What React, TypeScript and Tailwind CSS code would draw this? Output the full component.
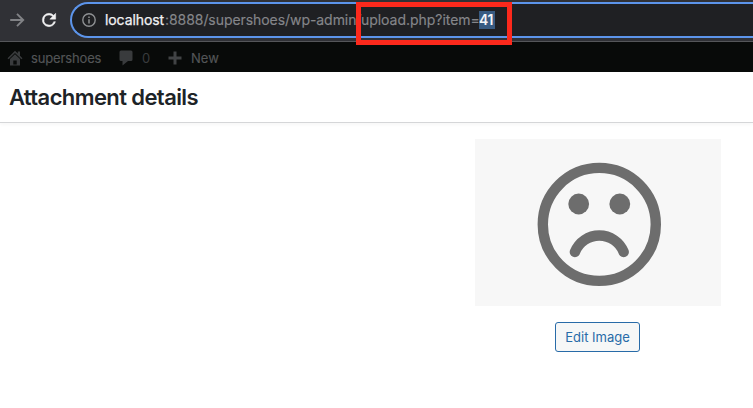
import React from 'react';

function BrowserBar() {
  return (
    <div className="flex h-[42px] items-start border-b border-[#55565a] bg-[#303136]">
      <div className="flex h-10 w-[70px] shrink-0 items-center">
        <svg className="ml-[9px] h-4 w-4" viewBox="0 0 16 16" fill="none" stroke="#818286" strokeWidth="1.9">
          <path d="M1.2 8H14M8 1.8L14.2 8L8 14.2" />
        </svg>
        <svg className="ml-[14px] h-5 w-5" viewBox="0 0 24 24" fill="#f1f1f2" stroke="#f1f1f2" strokeWidth=".6">
          <path d="M17.65 6.35A7.96 7.96 0 0 0 12 4a8 8 0 1 0 7.73 10h-2.08A6 6 0 1 1 12 6c1.66 0 3.14.69 4.22 1.78L13 11h7V4l-2.35 2.35z" />
        </svg>
      </div>
      <div className="mt-[2px] flex h-9 flex-1 items-center rounded-l-full border-2 border-r-0 border-[#5c94ea] bg-[#1f2023] pl-[10px]">
        <svg className="h-[14px] w-[14px] shrink-0" viewBox="0 0 14 14" fill="none" stroke="#8e9093">
          <circle cx="7" cy="7" r="6.2" strokeWidth="1.4" />
          <path d="M7 6.2V10.5M7 3.5V5" strokeWidth="1.5" />
        </svg>
        <div className="ml-[9px] flex text-[14px] leading-[18px] whitespace-nowrap text-[#85868a]">
          <span className="w-[60px] tracking-[-0.09px] text-[#f2f2f3] [-webkit-text-stroke:0.25px_#f2f2f3]">localhost</span>
          <span className="w-[196px] tracking-[-0.06px] [-webkit-text-stroke:0.15px_#85868a]">:8888/supershoes/wp-admin/</span>
          <span className="w-[118px] tracking-[-0.04px] [-webkit-text-stroke:0.15px_#85868a]">upload.php?item=</span>
          <span className="w-4 bg-[#385b82] font-semibold tracking-[-0.3px] text-[#f3f5f7]">41</span>
        </div>
      </div>
    </div>
  );
}

function AdminBar() {
  return (
    <div className="flex h-[30px] items-center bg-[#080a09] pt-[3px] text-[13px] leading-none text-[#535557]">
      <svg className="-mt-[2px] ml-[7px] h-4 w-4 shrink-0" viewBox="0 0 16 16" fill="#393b3d">
        <path d="M0.5 8.2L8 .8L10.8 3.5V1.5H13V5.7L15.5 8.2L14.4 9.3L8 3L1.6 9.3Z" />
        <path fillRule="evenodd" d="M8 4.2L13 9V15.5H3V9ZM6.3 10.5V14.5H9.7V10.5Z" />
      </svg>
      <span className="ml-2 w-[70px] tracking-[-0.15px] [-webkit-text-stroke:0.15px_#535557]">supershoes</span>
      <svg className="-mt-px ml-[18px] h-4 w-[14px] shrink-0" viewBox="0 0 14 16" fill="#393b3d">
        <path d="M2 .5H12Q13.5 .5 13.5 2V9.5Q13.5 11 12 11H9L3.5 15.5V11H2Q.5 11 .5 9.5V2Q.5 .5 2 .5Z" />
      </svg>
      <span className="ml-[9px] w-[9px] text-[#393b3d]">0</span>
      <svg className="-mt-px ml-[17px] h-[14px] w-[14px] shrink-0" viewBox="0 0 14 14" fill="none" stroke="#414345" strokeWidth="3">
        <path d="M7 .5V13.5M.5 7H13.5" />
      </svg>
      <span className="ml-[9px] [-webkit-text-stroke:0.15px_#535557]">New</span>
    </div>
  );
}

export default function App() {
  return (
    <div className="relative flex h-[408px] w-[753px] flex-col overflow-hidden bg-white font-[Inter,sans-serif]">
      <BrowserBar />
      <AdminBar />
      <header className="flex h-[51px] items-center border-b border-[#d5d6d8] pl-[9px] shadow-[0_2px_3px_rgba(0,0,0,0.03)]">
        <h1 className="text-[22px] leading-none font-semibold tracking-[-0.6px] text-[#1d2327]">Attachment details</h1>
      </header>
      <main className="flex flex-col items-end pt-4 pr-8">
        <div className="flex w-[246px] flex-col">
          <svg className="h-[167px] w-[246px] bg-[#f7f7f7]" viewBox="0 0 246 167" fill="none" stroke="#6d6d6d" strokeWidth="10.4">
            <circle cx="124.3" cy="85.4" r="56.5" />
            <circle cx="103.7" cy="65" r="10.4" fill="#6d6d6d" stroke="none" />
            <circle cx="144.8" cy="65" r="10.4" fill="#6d6d6d" stroke="none" />
            <path d="M99.9 113A26.3 26.3 0 0 1 148.7 113" strokeLinecap="round" />
          </svg>
          <button className="mt-4 ml-20 h-[30px] w-[85px] rounded-[3px] border border-[#286ba8] bg-[#f6f7f7] text-[13px] leading-none whitespace-nowrap text-[#286ba8]">
            Edit Image
          </button>
        </div>
      </main>
      <div className="absolute top-[2px] left-[356px] h-[43px] w-[156px] border-5 border-[#fc291c]" />
    </div>
  );
}
